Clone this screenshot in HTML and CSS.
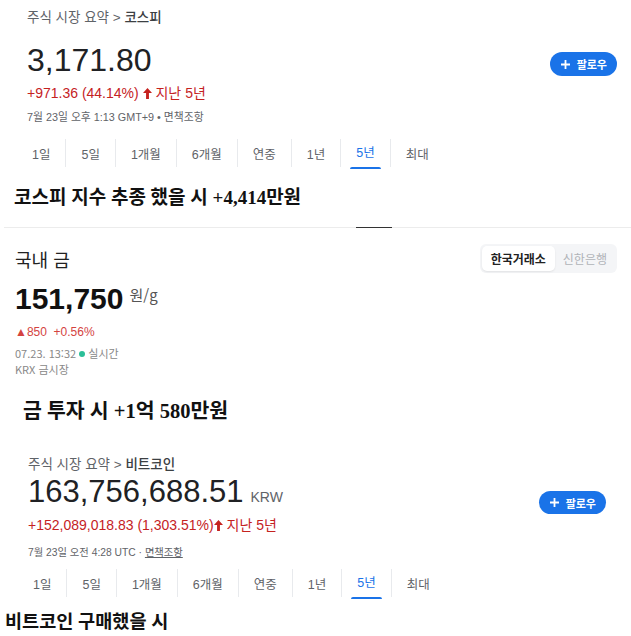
FILE: index.html
```html
<!DOCTYPE html>
<html lang="ko">
<head>
  <meta charset="UTF-8" />
  <title>5년 투자 비교</title>
  <link rel="stylesheet" href="styles.css">
</head>
<body>

  <section class="quote quote-kospi">
    <div class="crumb">주식 시장 요약 &gt; <span class="crumb-name">코스피</span></div>
    <div class="price-row">
      <div class="price">3,171.80</div>
      <button class="follow follow-kospi">
        <svg class="plus" viewBox="0 0 10 10"><path d="M5 0v10M0 5h10" /></svg>
        팔로우
      </button>
    </div>
    <div class="change">+971.36 (44.14%) <svg class="up" viewBox="0 0 10 12"><polygon points="5,0 10,5.5 6.6,5.5 6.6,12 3.4,12 3.4,5.5 0,5.5" /></svg> 지난 5년</div>
    <div class="stamp">7월 23일 오후 1:13 GMT+9 • 면책조항</div>
    <div class="tabs">
      <span class="tab">1일</span>
      <span class="tab">5일</span>
      <span class="tab">1개월</span>
      <span class="tab">6개월</span>
      <span class="tab">연중</span>
      <span class="tab">1년</span>
      <span class="tab active">5년</span>
      <span class="tab">최대</span>
    </div>
  </section>

  <h2 class="note note-kospi">코스피 지수 추종 했을 시 +4,414만원</h2>

  <div class="divider"><span class="divider-mark"></span></div>

  <section class="gold">
    <div class="gold-head">
      <div class="gold-title">국내 금</div>
      <div class="toggle">
        <span class="toggle-item on">한국거래소</span>
        <span class="toggle-item">신한은행</span>
      </div>
    </div>
    <div class="gold-price-row">
      <span class="gold-price">151,750</span>
      <span class="gold-unit">원/g</span>
    </div>
    <div class="gold-change">▲850&nbsp; +0.56%</div>
    <div class="gold-meta">07.23. 13:32 <span class="live-dot"></span> 실시간</div>
    <div class="gold-meta">KRX 금시장</div>
  </section>

  <h2 class="note note-gold">금 투자 시 +1억 580만원</h2>

  <section class="quote quote-btc">
    <div class="crumb">주식 시장 요약 &gt; <span class="crumb-name">비트코인</span></div>
    <div class="price-row">
      <div class="price">163,756,688.51<span class="currency">KRW</span></div>
      <button class="follow follow-btc">
        <svg class="plus" viewBox="0 0 10 10"><path d="M5 0v10M0 5h10" /></svg>
        팔로우
      </button>
    </div>
    <div class="change">+152,089,018.83 (1,303.51%)<svg class="up" viewBox="0 0 10 12"><polygon points="5,0 10,5.5 6.6,5.5 6.6,12 3.4,12 3.4,5.5 0,5.5" /></svg> 지난 5년</div>
    <div class="stamp">7월 23일 오전 4:28 UTC · <span class="disclaimer">면책조항</span></div>
    <div class="tabs">
      <span class="tab">1일</span>
      <span class="tab">5일</span>
      <span class="tab">1개월</span>
      <span class="tab">6개월</span>
      <span class="tab">연중</span>
      <span class="tab">1년</span>
      <span class="tab active">5년</span>
      <span class="tab">최대</span>
    </div>
  </section>

  <h2 class="note note-btc">비트코인 구매했을 시</h2>

</body>
</html>
```

FILE: styles.css
```css
body {
  margin: 0;
  background: #fff;
  font-family: "Liberation Sans", "Noto Sans CJK KR", sans-serif;
  color: #202124;
}

/* google finance style blocks */
.quote-kospi {
  padding: 0 14px 0 27px;
}

.quote-btc {
  padding: 0 25px 0 28px;
}

.crumb {
  margin-top: 8px;
  font-size: 13.5px;
  line-height: 20px;
  color: #5f6368;
}

.crumb-name {
  color: #3c4043;
  font-weight: 500;
}

.quote-btc .crumb {
  margin-top: 31px;
}

.price-row {
  display: flex;
  justify-content: space-between;
  align-items: flex-start;
  margin-top: 12px;
}

.quote-btc .price-row {
  margin-top: 0;
}

.price {
  font-size: 32px;
  line-height: 40px;
  color: #202124;
}

.quote-btc .price {
  font-size: 31px;
  line-height: 34px;
}

.currency {
  font-size: 14px;
  color: #5f6368;
  margin-left: 7px;
}

.follow {
  display: flex;
  align-items: center;
  gap: 7px;
  height: 24px;
  padding: 0 10px 0 11px;
  border: none;
  border-radius: 12px;
  background-color: #1a73e8;
  color: #fff;
  font-family: "Noto Sans CJK KR", sans-serif;
  font-size: 11px;
  font-weight: bold;
  cursor: pointer;
}

.follow-kospi {
  margin-top: 12px;
}

.follow-btc {
  margin-top: 16px;
  height: 23px;
}

.plus {
  width: 9px;
  height: 9px;
  stroke: #fff;
  stroke-width: 2;
}

.change {
  margin-top: 3px;
  font-size: 14px;
  line-height: 20px;
  color: #c5221f;
}

.quote-btc .change {
  margin-top: 1px;
}

.up {
  width: 9px;
  height: 11px;
  fill: #c5221f;
  vertical-align: -1px;
}

.stamp {
  margin-top: 6px;
  font-size: 10.8px;
  line-height: 16px;
  color: #5f6368;
}

.quote-btc .stamp {
  margin-top: 10px;
  font-size: 10.3px;
}

.disclaimer {
  text-decoration: underline;
}

.tabs {
  display: flex;
  margin-top: 14px;
  height: 28px;
}

.quote-btc .tabs {
  margin-top: 8px;
}

.tab {
  display: flex;
  flex-direction: column;
  justify-content: center;
  padding: 0 15px;
  border-left: 1px solid #e8eaed;
  font-size: 12.5px;
  color: #5f6368;
}

.tab:first-child {
  padding-left: 5px;
  border-left: none;
}

.tab.active {
  color: #1a73e8;
  padding-top: 3px;
}

.tab.active::after {
  content: "";
  display: block;
  height: 3px;
  margin: 6px -6px 0;
  border-radius: 3px 3px 0 0;
  background-color: #1a73e8;
  margin-bottom: -2px;
}

/* headline captions */
.note {
  margin: 0;
  font-family: "Liberation Serif", "Noto Sans CJK KR", serif;
  font-weight: bold;
  font-size: 19px;
  line-height: 26px;
  color: #111;
}

.note-kospi {
  margin-top: 18px;
  padding-left: 14px;
}

.note-gold {
  margin-top: 21px;
  padding-left: 23px;
  font-size: 20.5px;
}

.note-btc {
  margin-top: 12px;
  padding-left: 5px;
  font-size: 18.6px;
}

.divider {
  margin: 16px 0 0 4px;
  height: 1px;
  background-color: #ececec;
}

.divider-mark {
  display: block;
  width: 36px;
  height: 1px;
  margin-left: 352px;
  background-color: #333;
}

/* naver gold block */
.gold {
  padding: 0 14px 0 15px;
  font-family: "Noto Sans CJK KR", sans-serif;
}

.gold-head {
  display: flex;
  justify-content: space-between;
  align-items: center;
  margin-top: 16px;
  height: 29px;
}

.gold-title {
  font-size: 18px;
  color: #222;
}

.toggle {
  display: flex;
  padding: 2px;
  border-radius: 6px;
  background-color: #f4f5f7;
}

.toggle-item {
  padding: 0 8px 0 8px;
  line-height: 25px;
  font-size: 12px;
  color: #b0b3b8;
}

.toggle-item.on {
  padding: 0 9px;
  border-radius: 5px;
  background-color: #fff;
  color: #222;
  font-weight: bold;
  box-shadow: 0 1px 2px rgba(0, 0, 0, 0.08);
}

.gold-price-row {
  display: flex;
  align-items: flex-start;
  gap: 6px;
  margin-top: 8px;
  height: 36px;
}

.gold-price {
  font-family: "Liberation Sans", sans-serif;
  font-size: 30px;
  font-weight: bold;
  line-height: 36px;
  color: #111;
}

.gold-unit {
  margin-top: 4px;
  font-size: 15px;
  line-height: 20px;
  color: #555;
}

.gold-change {
  margin-top: 6px;
  font-family: "Liberation Sans", sans-serif;
  font-size: 12px;
  line-height: 18px;
  color: #d4433f;
}

.gold-meta {
  margin-top: 4px;
  font-size: 11px;
  line-height: 16px;
  color: #888;
}

.gold-meta + .gold-meta {
  margin-top: 0;
}

.live-dot {
  display: inline-block;
  width: 6px;
  height: 6px;
  border-radius: 50%;
  background-color: #2bbf98;
  vertical-align: 1px;
}
```
